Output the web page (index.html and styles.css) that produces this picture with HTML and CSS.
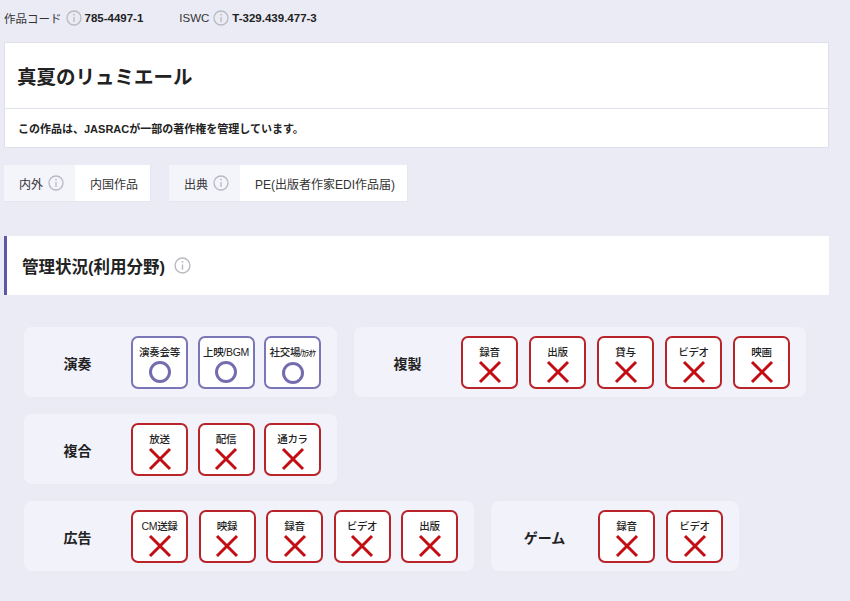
FILE: index.html
```html
<!DOCTYPE html>
<html lang="ja">
<head>
<meta charset="utf-8">
<link rel="stylesheet" href="styles.css">
</head>
<body>
<div class="page">
  <div class="codes">
    <span class="code-label">作品コード</span>
    <svg class="info" viewBox="0 0 16 16"><circle cx="8" cy="8" r="7" /><line x1="8" y1="7" x2="8" y2="12"/><circle class="dot" cx="8" cy="4.6" r="0.9"/></svg>
    <span class="code-value">785-4497-1</span>
    <span class="code-label iswc">ISWC</span>
    <svg class="info" viewBox="0 0 16 16"><circle cx="8" cy="8" r="7" /><line x1="8" y1="7" x2="8" y2="12"/><circle class="dot" cx="8" cy="4.6" r="0.9"/></svg>
    <span class="code-value">T-329.439.477-3</span>
  </div>

  <div class="title-card">
    <h1 class="title">真夏のリュミエール</h1>
    <p class="note">この作品は、JASRACが一部の著作権を管理しています。</p>
  </div>

  <div class="attrs">
    <div class="attr">
      <div class="attr-label">内外<svg class="info" viewBox="0 0 16 16"><circle cx="8" cy="8" r="7" /><line x1="8" y1="7" x2="8" y2="12"/><circle class="dot" cx="8" cy="4.6" r="0.9"/></svg></div>
      <div class="attr-value">内国作品</div>
    </div>
    <div class="attr">
      <div class="attr-label">出典<svg class="info" viewBox="0 0 16 16"><circle cx="8" cy="8" r="7" /><line x1="8" y1="7" x2="8" y2="12"/><circle class="dot" cx="8" cy="4.6" r="0.9"/></svg></div>
      <div class="attr-value">PE(出版者作家EDI作品届)</div>
    </div>
  </div>

  <div class="section-head">
    <h2 class="section-title">管理状況(利用分野)</h2>
    <svg class="info big" viewBox="0 0 16 16"><circle cx="8" cy="8" r="7" /><line x1="8" y1="7" x2="8" y2="12"/><circle class="dot" cx="8" cy="4.6" r="0.9"/></svg>
  </div>

  <div class="groups">
    <div class="group-row">
      <div class="group">
        <div class="group-label">演奏</div>
        <div class="cards">
          <div class="card ok"><span class="card-text">演奏会等</span><svg class="mark" viewBox="0 0 24 24"><circle cx="12" cy="12" r="9.5"/></svg></div>
          <div class="card ok"><span class="card-text">上映/BGM</span><svg class="mark" viewBox="0 0 24 24"><circle cx="12" cy="12" r="9.5"/></svg></div>
          <div class="card ok"><span class="card-text">社交場<small>/ｶﾗｵｹ</small></span><svg class="mark" viewBox="0 0 24 24"><circle cx="12" cy="12" r="9.5"/></svg></div>
        </div>
      </div>
      <div class="group">
        <div class="group-label">複製</div>
        <div class="cards wide">
          <div class="card ng"><span class="card-text">録音</span><svg class="mark" viewBox="0 0 24 24"><path d="M2 2L22 22M22 2L2 22"/></svg></div>
          <div class="card ng"><span class="card-text">出版</span><svg class="mark" viewBox="0 0 24 24"><path d="M2 2L22 22M22 2L2 22"/></svg></div>
          <div class="card ng"><span class="card-text">貸与</span><svg class="mark" viewBox="0 0 24 24"><path d="M2 2L22 22M22 2L2 22"/></svg></div>
          <div class="card ng"><span class="card-text">ビデオ</span><svg class="mark" viewBox="0 0 24 24"><path d="M2 2L22 22M22 2L2 22"/></svg></div>
          <div class="card ng"><span class="card-text">映画</span><svg class="mark" viewBox="0 0 24 24"><path d="M2 2L22 22M22 2L2 22"/></svg></div>
        </div>
      </div>
    </div>

    <div class="group-row">
      <div class="group">
        <div class="group-label">複合</div>
        <div class="cards">
          <div class="card ng"><span class="card-text">放送</span><svg class="mark" viewBox="0 0 24 24"><path d="M2 2L22 22M22 2L2 22"/></svg></div>
          <div class="card ng"><span class="card-text">配信</span><svg class="mark" viewBox="0 0 24 24"><path d="M2 2L22 22M22 2L2 22"/></svg></div>
          <div class="card ng"><span class="card-text">通カラ</span><svg class="mark" viewBox="0 0 24 24"><path d="M2 2L22 22M22 2L2 22"/></svg></div>
        </div>
      </div>
    </div>

    <div class="group-row">
      <div class="group">
        <div class="group-label">広告</div>
        <div class="cards mid">
          <div class="card ng"><span class="card-text">CM送録</span><svg class="mark" viewBox="0 0 24 24"><path d="M2 2L22 22M22 2L2 22"/></svg></div>
          <div class="card ng"><span class="card-text">映録</span><svg class="mark" viewBox="0 0 24 24"><path d="M2 2L22 22M22 2L2 22"/></svg></div>
          <div class="card ng"><span class="card-text">録音</span><svg class="mark" viewBox="0 0 24 24"><path d="M2 2L22 22M22 2L2 22"/></svg></div>
          <div class="card ng"><span class="card-text">ビデオ</span><svg class="mark" viewBox="0 0 24 24"><path d="M2 2L22 22M22 2L2 22"/></svg></div>
          <div class="card ng"><span class="card-text">出版</span><svg class="mark" viewBox="0 0 24 24"><path d="M2 2L22 22M22 2L2 22"/></svg></div>
        </div>
      </div>
      <div class="group">
        <div class="group-label">ゲーム</div>
        <div class="cards wide">
          <div class="card ng"><span class="card-text">録音</span><svg class="mark" viewBox="0 0 24 24"><path d="M2 2L22 22M22 2L2 22"/></svg></div>
          <div class="card ng"><span class="card-text">ビデオ</span><svg class="mark" viewBox="0 0 24 24"><path d="M2 2L22 22M22 2L2 22"/></svg></div>
        </div>
      </div>
    </div>
  </div>
</div>
</body>
</html>
```

FILE: styles.css
```css
html, body {
  margin: 0;
  padding: 0;
  background: #ebebf6;
}
body {
  font-family: "Liberation Sans", "Noto Sans CJK JP", sans-serif;
  color: #222;
  font-size: 12px;
}
.page {
  width: 825px;
  margin-left: 4px;
}
.codes {
  display: flex;
  align-items: center;
  height: 42px;
  padding-bottom: 6px;
  box-sizing: border-box;
}
.code-label {
  font-size: 11.5px;
  color: #333;
}
.code-label.iswc {
  margin-left: 36px;
}
.code-value {
  font-weight: bold;
  font-size: 11.5px;
  color: #222;
}
.info {
  width: 16px;
  height: 16px;
  margin: 0 3px 0 4px;
  fill: none;
  stroke: #b9b9c0;
  stroke-width: 1.3;
  flex: none;
}
.info .dot {
  fill: #b9b9c0;
  stroke: none;
}
.info.big {
  width: 17px;
  height: 17px;
  margin-left: 9px;
}
.title-card {
  background: #fff;
  border: 1px solid #e0e0ec;
}
.title {
  margin: 0;
  height: 65px;
  display: flex;
  align-items: center;
  padding-left: 12px;
  font-size: 19.5px;
  font-weight: bold;
  border-bottom: 1px solid #e2e2ec;
}
.note {
  margin: 0;
  height: 38px;
  display: flex;
  align-items: center;
  padding-left: 13px;
  font-size: 11px;
  font-weight: bold;
}
.attrs {
  display: flex;
  gap: 18px;
  margin-top: 17px;
}
.attr {
  display: flex;
  height: 36px;
  border: 1px solid #e6e6f0;
  border-width: 0 1px 1px 0;
}
.attr-label {
  background: #f4f4fb;
  display: flex;
  align-items: center;
  padding: 0 8px 0 15px;
  font-size: 12px;
  color: #333;
  white-space: nowrap;
}
.attr-label .info {
  margin-left: 5px;
}
.attr-value {
  background: #fff;
  display: flex;
  align-items: center;
  padding: 0 12px 0 15px;
  font-size: 12px;
  color: #333;
  white-space: nowrap;
}
.section-head {
  margin-top: 34px;
  height: 59px;
  background: #fff;
  border-left: 3px solid #5d59a6;
  display: flex;
  align-items: center;
  padding-left: 15px;
}
.section-title {
  margin: 0;
  font-size: 16.5px;
  font-weight: bold;
  color: #222;
}
.groups {
  display: flex;
  flex-direction: column;
  gap: 17px;
  margin-top: 32px;
  padding-left: 20px;
}
.group-row {
  display: flex;
  gap: 17px;
}
.group {
  display: flex;
  align-items: center;
  background: #f2f2fa;
  border-radius: 8px;
  padding: 9px 16px 8px 0;
}
.group-label {
  width: 107px;
  text-align: center;
  font-size: 14px;
  font-weight: bold;
  color: #222;
}
.cards {
  display: flex;
  gap: 9.5px;
}
.cards.mid {
  gap: 10.5px;
}
.cards.wide {
  gap: 11px;
}
.card {
  width: 57px;
  height: 53px;
  box-sizing: border-box;
  background: #fff;
  border-radius: 7px;
  display: flex;
  flex-direction: column;
  align-items: center;
  padding-top: 8px;
}
.card.ok {
  border: 2px solid #7b77b6;
}
.card.ng {
  border: 2px solid #b8242a;
}
.card-text {
  font-size: 10.5px;
  line-height: 13px;
  font-weight: 500;
  color: #222;
  white-space: nowrap;
  letter-spacing: -0.3px;
}
.card-text small {
  font-size: 8.5px;
  letter-spacing: -0.8px;
}
.mark {
  width: 24px;
  height: 24px;
  margin-top: 1px;
  fill: none;
}
.ok .mark {
  stroke: #736daf;
  stroke-width: 3;
}
.ng .mark {
  stroke: #c40d12;
  stroke-width: 3;
}
```
